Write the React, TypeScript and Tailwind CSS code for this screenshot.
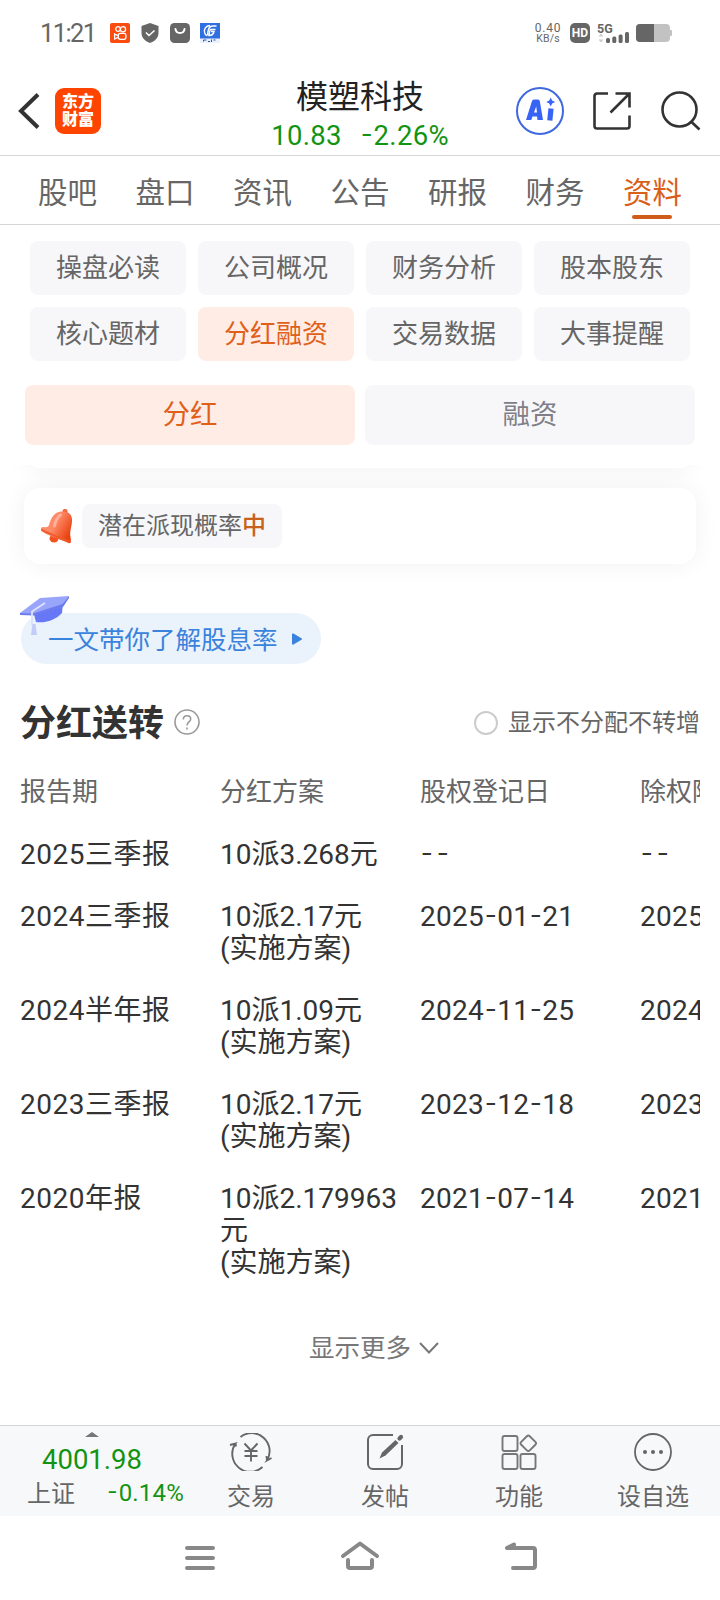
import React, { useState } from "react";
import clsx from "clsx";

interface IRow {
	period: string;
	plan: string[];
	recordDate: string;
	exDate: string;
}

const tabs = ["股吧", "盘口", "资讯", "公告", "研报", "财务", "资料"];

const sections = [
	"操盘必读",
	"公司概况",
	"财务分析",
	"股本股东",
	"核心题材",
	"分红融资",
	"交易数据",
	"大事提醒",
];

const rows: IRow[] = [
	{ period: "2025三季报", plan: ["10派3.268元"], recordDate: "--", exDate: "--" },
	{ period: "2024三季报", plan: ["10派2.17元", "(实施方案)"], recordDate: "2025-01-21", exDate: "2025-01-22" },
	{ period: "2024半年报", plan: ["10派1.09元", "(实施方案)"], recordDate: "2024-11-25", exDate: "2024-11-26" },
	{ period: "2023三季报", plan: ["10派2.17元", "(实施方案)"], recordDate: "2023-12-18", exDate: "2023-12-19" },
	{ period: "2020年报", plan: ["10派2.179963", "元", "(实施方案)"], recordDate: "2021-07-14", exDate: "2021-07-15" },
];

// widens the hyphens, Roboto's own are very short
const Dashed = ({ text }: { text: string }) => (
	<>
		{text.split(/(-)/).map((part, i) =>
			part === "-" ? (
				<span
					key={i}
					className={clsx(
						"inline-block -translate-y-[2px] scale-x-125",
						text === "--" ? "ml-[3px] mr-[5px]" : "mx-[2.5px]"
					)}
				>
					-
				</span>
			) : (
				part
			)
		)}
	</>
);

const StatusBar = () => (
	<div className="flex h-[66px] items-center pl-10 pr-[48px] text-[#666]">
		<span className="w-[70px] pt-[2px] text-[25.5px] leading-none tracking-[-1.6px]">11:21</span>
		<div className="flex items-center gap-[10px]">
			<svg width="20" height="20" viewBox="0 0 20 20" fill="none" stroke="#fff" strokeWidth="1.3">
				<rect width="20" height="20" rx="2" fill="#fa4b10" stroke="none" />
				<circle cx="8" cy="6" r="2.3" />
				<circle cx="13" cy="6.2" r="2.6" />
				<rect x="8.3" y="10.3" width="7.6" height="6" rx="2" />
				<path d="M8 12.6 4.6 11v5L8 14.4" />
			</svg>
			<svg width="20" height="20" viewBox="0 0 20 20">
				<path d="M10 0 18.5 3v7c0 5-4 8.5-8.5 10C5.5 18.5 1.5 15 1.5 10V3z" fill="#666" />
				<path d="m6 9.500 3 3 5.500-5" fill="none" stroke="#fff" strokeWidth="1.500" />
			</svg>
			<svg width="20" height="20" viewBox="0 0 20 20">
				<rect width="20" height="20" rx="4.500" fill="#666" />
				<path d="M5.500 6c.6 5.300 8.400 5.300 9 0" fill="none" stroke="#fff" strokeWidth="2" strokeLinecap="round" />
			</svg>
			<svg width="20" height="20" viewBox="0 0 20 20" fill="none" stroke="#fff">
				<rect width="20" height="20" fill="#eaf1fd" stroke="none" />
				<rect width="20" height="15.500" fill="#2f6fe0" stroke="none" />
				<path d="M10 2.500C5.500 3 4 6 4.500 9s2 3.500 2.500 3.500M16.500 3h-4C9 3 8 6 7.500 12.500M15.500 6.500H11c-1 0-1.500 2-2 6 3 0 4.500-1.500 5-4h-3" strokeWidth="1.400" />
				<path d="M3.500 18.500v-1.500h3M8 18.500h2M11.500 16.500v2.500M13.500 17h2" stroke="#1f57b8" />
			</svg>
		</div>
		<div className="ml-auto flex items-center">
			<div className="mr-2 flex w-[28px] flex-col items-center pt-px">
				<span className="text-[12px] leading-[11px] tracking-[0.8px]">0.40</span>
				<span className="text-[10.5px] leading-[10px] tracking-[0.2px]">KB/s</span>
			</div>
			<div className="flex size-5 items-center justify-center rounded-[5px] bg-[#666] text-[12px] font-bold text-white">HD</div>
			<svg className="ml-[7px]" width="34" height="20" viewBox="0 0 34 20" fill="#666">
				<text x="0" y="9.500" fontSize="12.500" fontWeight="700" fontFamily="Roboto, sans-serif">5G</text>
				<path d="M1.500 13.500 4 10.500l2.500 3zM1.500 16.500 4 19.500l2.500-3z" fill="#ccc" />
				<rect x="9" y="15" width="4" height="5" rx="1.500" />
				<rect x="15.300" y="13.500" width="4" height="6.500" rx="1.500" />
				<rect x="21.600" y="11.500" width="4" height="8.500" rx="1.500" />
				<rect x="28" y="9" width="4" height="11" rx="1.500" />
			</svg>
			<svg className="ml-[5px]" width="36" height="18" viewBox="0 0 36 18">
				<rect width="34" height="18" rx="4" fill="#c2c2c2" />
				<rect x="33" y="6" width="3" height="6" rx="1" fill="#c2c2c2" />
				<path d="M4 0h14v18H4a4 4 0 0 1-4-4V4a4 4 0 0 1 4-4z" fill="#666" />
			</svg>
		</div>
	</div>
);

const Header = () => (
	<header className="flex h-[90px] items-center border-b border-[#d6d6d6] pl-[18px] pr-[18px]">
		<div className="flex w-[190px] items-center">
			<svg width="22" height="36" viewBox="0 0 22 36" fill="none" stroke="#333" strokeWidth="4">
				<path d="M20 1.500 3 18l17 16.500" />
			</svg>
			<div className="ml-[15px] flex size-[46px] flex-col items-center justify-center rounded-[9px] bg-[#ff4400] text-[16px] font-black leading-[18px] text-white">
				<span>东方</span>
				<span>财富</span>
			</div>
		</div>
		<div className="flex flex-1 flex-col items-center pr-[4px] pt-[10px]">
			<h1 className="text-[32px] leading-[40px] text-[#222]">模塑科技</h1>
			<p className="flex gap-[19px] text-[27.5px] leading-[38px] text-[#129412]">
				<span className="tracking-[0.3px]">10.83</span>
				<span className="tracking-[0.3px]">
					<Dashed text="-2.26%" />
				</span>
			</p>
		</div>
		<div className="flex items-center">
			<svg width="48" height="48" viewBox="0 0 48 48" fill="none">
				<circle cx="24" cy="24" r="23" stroke="#3f67df" strokeWidth="2" />
				<path d="M10 33 16 14q.5-1.500 2-1.500h4q1.500 0 1.800 1.500L27 33h-5.500l-.5-3.500h-4.500L15.300 33zM18 25.500h3l-.8-6z" fill="#3864f5" fillRule="evenodd" />
				<path d="m35 21.500-1.200 12" stroke="#3864f5" strokeWidth="5.200" />
				<path d="m34.700 10.500 1.400 3.100 3.100 1.400-3.100 1.400-1.400 3.100-1.400-3.100-3.100-1.400 3.100-1.400z" fill="#3864f5" />
			</svg>
			<svg className="ml-[29px]" width="38" height="38" viewBox="0 0 38 38" fill="none" stroke="#333" strokeWidth="2.600">
				<path d="M15 1.500H4a2.500 2.500 0 0 0-2.500 2.500v30A2.500 2.500 0 0 0 4 36.500h30a2.500 2.500 0 0 0 2.500-2.500V23.500M22.500 1.500h14v14M36.500 1.500 17.500 20.500" />
			</svg>
			<svg className="ml-[30px] mr-px" width="40" height="40" viewBox="0 0 40 40" fill="none" stroke="#333" strokeWidth="2.600">
				<circle cx="18.500" cy="18.500" r="17" />
				<path d="m30 30.500 8.500 8" />
			</svg>
		</div>
	</header>
);

const BellIcon = () => (
	<svg width="34" height="36" viewBox="0 0 34 36">
		<defs>
			<linearGradient id="bell" x1="0" y1="0" x2="1" y2="0.6">
				<stop offset="0" stopColor="#ff8a68" />
				<stop offset="0.5" stopColor="#ff8a68" />
				<stop offset="1" stopColor="#e8420f" />
			</linearGradient>
		</defs>
		<ellipse cx="14" cy="30.500" rx="4.500" ry="4" fill="#f4511e" />
		<rect x="22.500" y="1" width="5" height="6" rx="2" fill="#f4673d" />
		<path d="M9 17C11 10 14 3.500 22 3.500c8 0 10.500 4 10 10-.5 6-2.500 10-1.500 15.500.8 4.500.5 7-2 6C20 31 9 28.500 2 23.500c-2-1.500-1-5 1.500-4.500 3 .5 4.800 0 5.500-2z" fill="url(#bell)" />
		<path d="M2 22c8 4.500 18 7.500 28 12" fill="none" stroke="#ee5a2b" strokeWidth="1.800" strokeLinecap="round" />
		<path d="M14.500 18c1-5 2.500-9 6-11" fill="none" stroke="#ffb09a" strokeWidth="3" strokeLinecap="round" />
	</svg>
);

const CapIcon = () => (
	<svg width="50" height="42" viewBox="0 0 50 42">
		<path d="M13 15.500 16 27c8 1.500 20-2 26-9l1-10z" fill="#6678f5" />
		<path d="M0 18 20 3l29-2-6.500 9L14 18.500z" fill="#98a5fb" />
		<path d="M0 18v2l14 .5L43 12l6-9V1l-6.500 8L14 18.300z" fill="#6c7cf0" />
		<path d="m25 8-13 8.500V31" fill="none" stroke="#dde2fd" strokeWidth="1.800" />
		<path d="M12.500 29h3l1.500 11h-6z" fill="#c3ccf8" />
	</svg>
);

const TradeIcon = () => (
	<svg width="44" height="38" viewBox="0 0 44 38" fill="none" stroke="#666" strokeWidth="1.900">
		<path d="M11.500 4A18 18 0 0 1 38 27.500l4.500-2.500M38 27.500l-.5-4.500M33.500 34A18 18 0 0 1 6.500 10.500l-5.500 1.500M6.500 10.500l.5 3" />
		<path d="m15.500 10.500 6.500 7 6.500-7M22 17.500v11M15.500 18h13M15.500 23h13" />
	</svg>
);

const PostIcon = () => (
	<svg width="38" height="38" viewBox="0 0 38 38" fill="none" stroke="#666" strokeWidth="2">
		<path d="M27 2H7a5 5 0 0 0-5 5v24a5 5 0 0 0 5 5h24a5 5 0 0 0 5-5V12" />
		<path d="m29.500 7 3 3-13 12.500-6 3 2.500-6z" fill="#666" stroke="none" />
		<path d="m33.500 5.500 1.500-1.500" strokeWidth="4.200" strokeLinecap="round" />
	</svg>
);

const GridIcon = () => (
	<svg width="38" height="38" viewBox="0 0 38 38" fill="none" stroke="#777" strokeWidth="1.900">
		<rect x="2.500" y="3" width="15" height="15" rx="2" />
		<rect x="2.500" y="21" width="15" height="15" rx="2" />
		<rect x="20.500" y="21" width="15" height="15" rx="2" />
		<rect x="22.300" y="4.300" width="12" height="12" rx="2" transform="rotate(45 28.300 10.300)" />
	</svg>
);

const MoreIcon = () => (
	<svg width="38" height="38" viewBox="0 0 38 38" fill="#666">
		<circle cx="19" cy="19" r="18" fill="none" stroke="#666" strokeWidth="1.800" />
		<circle cx="11" cy="19" r="2" />
		<circle cx="19" cy="19" r="2" />
		<circle cx="27" cy="19" r="2" />
	</svg>
);

const actions = [
	{ label: "交易", Icon: TradeIcon },
	{ label: "发帖", Icon: PostIcon },
	{ label: "功能", Icon: GridIcon },
	{ label: "设自选", Icon: MoreIcon },
];

const App = () => {
	const [tab, setTab] = useState("资料");
	const [section, setSection] = useState("分红融资");
	const [kind, setKind] = useState("分红");

	return (
		<div className="flex h-[1600px] w-[720px] flex-col overflow-hidden bg-white font-['Roboto','Noto_Sans_CJK_SC',sans-serif] text-[#333]">
			<StatusBar />
			<Header />

			<nav className="flex h-[69px] justify-between border-b border-[#d6d6d6] px-[38px]">
				{tabs.map((t) => (
					<button
						key={t}
						onClick={() => setTab(t)}
						className={clsx(
							"flex flex-col items-center whitespace-nowrap pt-4 text-[29.5px] leading-[42px]",
							t === tab ? "text-[#d9601a]" : "text-[#666]"
						)}
					>
						{t}
						{t === tab && <span className="mt-px h-1 w-10 rounded-full bg-[#d05c1c]" />}
					</button>
				))}
			</nav>

			<div className="grid grid-cols-4 gap-3 px-[30px] pt-4">
				{sections.map((s) => (
					<button
						key={s}
						onClick={() => setSection(s)}
						className={clsx(
							"h-[54px] rounded-lg text-[26px] leading-[54px]",
							s === section ? "bg-[#ffede5] text-[#e0601a]" : "bg-[#f7f7fa] text-[#666]"
						)}
					>
						{s}
					</button>
				))}
			</div>

			<div className="grid grid-cols-2 gap-[10px] px-[25px] pb-5 pt-6">
				{["分红", "融资"].map((k) => (
					<button
						key={k}
						onClick={() => setKind(k)}
						className={clsx(
							"h-[60px] rounded-lg text-[27.5px] leading-[60px]",
							k === kind ? "bg-[#ffede5] text-[#e0601a]" : "bg-[#f7f7fa] text-[#7f7f88]"
						)}
					>
						{k}
					</button>
				))}
			</div>

			<main className="flex-1 overflow-hidden">
				{/* bottom edge of the card scrolled under the tabs */}
				<div className="mx-6 -mt-[37px] h-10 rounded-2xl bg-white shadow-[0_0_24px_rgba(0,0,0,0.06)]" />
				<div className="relative mx-6 mt-5 flex h-[76px] items-center rounded-2xl bg-white pl-4 shadow-[0_0_24px_rgba(0,0,0,0.06)]">
					<BellIcon />
					<div className="ml-2 flex h-11 w-[200px] items-center rounded-lg bg-[#f7f7fa] pl-4 text-[24px] text-[#666]">
						潜在派现概率<span className="font-medium text-[#c8611c]">中</span>
					</div>
				</div>

				<div className="relative ml-[21px] mt-[49px] flex h-[51px] w-[300px] items-center rounded-full bg-[#eaf2fc] pl-[27px] pt-[3px] text-[25.5px] text-[#3a83dc]">
					<div className="absolute -left-px -top-[18px]">
						<CapIcon />
					</div>
					一文带你了解股息率
					<svg className="mb-[3px] ml-[14px]" width="10" height="12" viewBox="0 0 10 12" fill="#3a83dc">
						<path d="M0 1.500Q0 0 1.500.5l8 4.700q1 .8 0 1.600l-8 4.700Q0 12 0 10.500z" />
					</svg>
				</div>

				<div className="mt-[31px] flex h-[56px] items-center pl-[20px] pr-[20px]">
					<h2 className="pt-px text-[36px] font-bold leading-[56px]">分红送转</h2>
					<svg className="mb-[2px] ml-[10px]" width="26" height="26" viewBox="0 0 26 26" fill="none" stroke="#999" strokeWidth="1.600">
						<circle cx="13" cy="13" r="12" />
						<path d="M9.300 10.500c0-5 7.400-5 7.400-.5 0 3-3.700 3-3.700 6.500M13 18.500v2" />
					</svg>
					<label className="ml-auto flex items-center gap-[10px] text-[24px] text-[#666]">
						<span className="size-6 rounded-full border-2 border-[#ccc]" />
						显示不分配不转增
					</label>
				</div>

				<div className="ml-[20px] mr-5 overflow-hidden whitespace-nowrap">
					<div className="grid grid-cols-[200px_200px_220px_220px] pt-[21px] text-[26px] leading-[40px] text-[#666]">
						<span>报告期</span>
						<span>分红方案</span>
						<span>股权登记日</span>
						<span>除权除息日</span>
					</div>
					<div className="-mt-[3px]">
						{rows.map((row) => (
							<div
								key={row.period}
								className="mt-[30px] grid grid-cols-[200px_200px_220px_220px] text-[28px] leading-[32px]"
							>
								<span className="tracking-[0.5px]">{row.period}</span>
								<span className="flex flex-col">
									{row.plan.map((line) => (
										<span key={line}>{line}</span>
									))}
								</span>
								<span className="tracking-[0.3px]">
									<Dashed text={row.recordDate} />
								</span>
								<span className="tracking-[0.3px]">
									<Dashed text={row.exDate} />
								</span>
							</div>
						))}
					</div>
				</div>

				<button className="mt-[49px] flex h-[40px] w-full items-center justify-center gap-2 pl-[28px] text-[25.5px] text-[#777]">
					显示更多
					<svg width="20" height="12" viewBox="0 0 20 12" fill="none" stroke="#777" strokeWidth="2">
						<path d="m1 1 9 9.500L19 1" />
					</svg>
				</button>
			</main>

			<footer className="flex h-[91px] shrink-0 border-t border-[#d6d6d6] bg-[#f7f8fa] text-[#666]">
				<div className="flex w-[184px] flex-col pt-[6px]">
					<svg className="ml-[85px]" width="14" height="5" viewBox="0 0 14 5" fill="#777">
						<path d="m7 0 7 5H0z" />
					</svg>
					<span className="pl-[42px] text-[27.5px] leading-[45px] text-[#129412]">4001.98</span>
					<div className="flex justify-between pl-[27px] text-[24px] leading-6">
						<span>上证</span>
						<span className="-mt-px tracking-[0.2px] text-[#129412]">
							<Dashed text="-0.14%" />
						</span>
					</div>
				</div>
				<div className="grid flex-1 grid-cols-4">
					{actions.map(({ label, Icon }) => (
						<button key={label} className="flex flex-col items-center pt-[7px] text-[24px] leading-[53px]">
							<Icon />
							{label}
						</button>
					))}
				</div>
			</footer>

			<div className="flex h-[84px] shrink-0 items-start justify-center gap-[123px] pt-[22px]">
				<svg width="34" height="34" viewBox="0 0 34 34" stroke="#888" strokeWidth="4" strokeLinecap="round">
					<path d="M4 10h26M4 20h26M4 30h26" />
				</svg>
				<svg width="40" height="34" viewBox="0 0 40 34" fill="none" stroke="#888" strokeWidth="4" strokeLinecap="round" strokeLinejoin="round">
					<path d="M3 18 20 5.500 37 18M8 22v6q0 2 2 2h20q2 0 2-2v-6" />
				</svg>
				<svg width="34" height="34" viewBox="0 0 34 34" fill="none" stroke="#888" strokeWidth="4" strokeLinecap="round" strokeLinejoin="round">
					<path d="M11 6.500 4 10h26q2 0 2 2v16q0 2-2 2H10" />
				</svg>
			</div>
		</div>
	);
};

export default App;
